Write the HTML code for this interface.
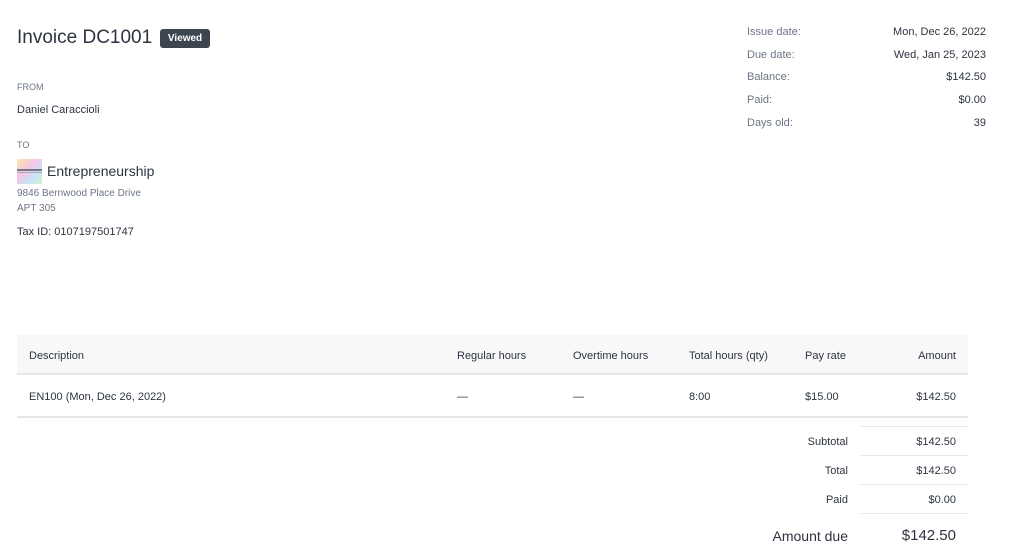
<!DOCTYPE html><html><head><style>
*{margin:0;padding:0;box-sizing:border-box}
body{width:1009px;height:559px;background:#fff;font-family:"Liberation Sans",sans-serif;color:#2d3440;position:relative;overflow:hidden}
.a{position:absolute;white-space:nowrap}
.s{font-size:11px}.g{color:#6b7684}
.r{text-align:right}
</style></head><body>
<div class="a" style="left:17px;top:27px;font-size:19px;color:#2d3440">Invoice DC1001</div>
<div class="a" style="left:160px;top:29px;width:50px;height:19px;background:#3d4550;border-radius:3px;color:#fff;font-size:10px;font-weight:bold;text-align:center;line-height:19px">Viewed</div>
<div class="a g" style="left:17px;top:82px;font-size:9px">FROM</div>
<div class="a s" style="left:17px;top:104px">Daniel Caraccioli</div>
<div class="a g" style="left:17px;top:140px;font-size:9px">TO</div>
<div class="a" style="left:17px;top:159px;width:25px;height:25px;background:linear-gradient(135deg,#fbe6a8,#f6c6e6 40%,#c7e3f8 70%,#d8f0d0)"><div style="margin-top:10px;height:2px;background:#778"></div><div style="margin-top:1px;height:1px;background:#aab"></div></div>
<div class="a" style="left:47px;top:163px;font-size:14px">Entrepreneurship</div>
<div class="a g" style="left:17px;top:188px;font-size:10px">9846 Bernwood Place Drive</div>
<div class="a g" style="left:17px;top:203px;font-size:10px">APT 305</div>
<div class="a s" style="left:17px;top:226px">Tax ID: 0107197501747</div>

<div class="a s g" style="left:747px;top:26px">Issue date:</div><div class="a s r" style="right:23px;top:26px">Mon, Dec 26, 2022</div>
<div class="a s g" style="left:747px;top:49px">Due date:</div><div class="a s r" style="right:23px;top:49px">Wed, Jan 25, 2023</div>
<div class="a s g" style="left:747px;top:71px">Balance:</div><div class="a s r" style="right:23px;top:71px">$142.50</div>
<div class="a s g" style="left:747px;top:94px">Paid:</div><div class="a s r" style="right:23px;top:94px">$0.00</div>
<div class="a s g" style="left:747px;top:117px">Days old:</div><div class="a s r" style="right:23px;top:117px">39</div>

<div class="a" style="left:17px;top:335px;width:951px;height:40px;background:#f8f8f9;border-bottom:2px solid #e3e6ea"></div>
<div class="a" style="left:17px;top:416px;width:951px;height:2px;background:#e3e6ea"></div>
<div class="a s" style="left:29px;top:350px">Description</div>
<div class="a s" style="left:457px;top:350px">Regular hours</div>
<div class="a s" style="left:573px;top:350px">Overtime hours</div>
<div class="a s" style="left:689px;top:350px">Total hours (qty)</div>
<div class="a s" style="left:805px;top:350px">Pay rate</div>
<div class="a s r" style="right:53px;top:350px">Amount</div>
<div class="a s" style="left:29px;top:391px">EN100 (Mon, Dec 26, 2022)</div>
<div class="a s" style="left:457px;top:391px">—</div>
<div class="a s" style="left:573px;top:391px">—</div>
<div class="a s" style="left:689px;top:391px">8:00</div>
<div class="a s" style="left:805px;top:391px">$15.00</div>
<div class="a s r" style="right:53px;top:391px">$142.50</div>

<div class="a" style="left:860px;top:426px;width:108px;height:1px;background:#e6e8eb"></div>
<div class="a" style="left:860px;top:455px;width:108px;height:1px;background:#e6e8eb"></div>
<div class="a" style="left:860px;top:484px;width:108px;height:1px;background:#e6e8eb"></div>
<div class="a" style="left:860px;top:513px;width:108px;height:1px;background:#e6e8eb"></div>
<div class="a s r" style="right:161px;top:436px">Subtotal</div><div class="a s r" style="right:53px;top:436px">$142.50</div>
<div class="a s r" style="right:161px;top:465px">Total</div><div class="a s r" style="right:53px;top:465px">$142.50</div>
<div class="a s r" style="right:161px;top:494px">Paid</div><div class="a s r" style="right:53px;top:494px">$0.00</div>
<div class="a r" style="right:161px;top:528px;font-size:14px">Amount due</div><div class="a r" style="right:53px;top:527px;font-size:15px">$142.50</div>
</body></html>
